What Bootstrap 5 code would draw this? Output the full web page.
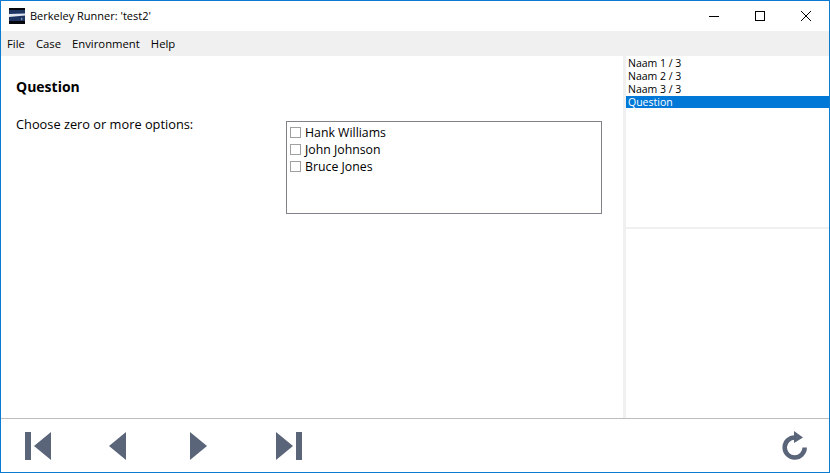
<!DOCTYPE html>
<html lang="en"><head><meta charset="utf-8"><title>Berkeley Runner</title>
<link href="https://cdn.jsdelivr.net/npm/bootstrap@5.3.0/dist/css/bootstrap.min.css" rel="stylesheet">
<style>
html,body{height:100%;margin:0;overflow:hidden}
body{font-family:"Open Sans","Noto Sans",sans-serif;font-size:12px;color:#000;background:#fff}
.win{height:473px;width:830px;border:1px solid #0b7ad1}
.tbar{height:30px;padding-left:8px}
.tlogo{width:16px;height:16px;margin-right:5px}
.ttl{font-size:11px;line-height:16px}
.wbtns{width:138px}
.wbtn{width:46px;height:30px}
.mbar{height:25px;background:#f0f0f0;padding-left:6px;gap:11px;line-height:25px;font-size:11.3px}
.midarea{height:362px}
.leftp{width:622px;flex:none;padding:21px 15px 0}
.qhead{font-size:14px;font-weight:700;line-height:20px;margin-bottom:18px}
.qlabel{width:270px;font-size:12.8px;line-height:17px;padding-top:1px}
.optbox{width:316px;height:93px;border:1px solid #82828c;padding:2px;font-size:12.3px;margin-top:6px}
.opt{height:17px;line-height:17px;gap:4px;padding-left:1px}
.cbox{width:11px;height:11px;border:1px solid #a0a0a0;background:#fff;flex:none;margin-top:-1px}
.vsplit{width:3px;flex:none;background:#f0f0f0}
.rightp{flex:1 1 0;min-width:0}
.treep{height:171px;padding-top:1px}
.hsplit{height:2px;background:#f0f0f0}
.ti{height:13px;line-height:13px;padding-left:2px;font-size:10.5px;white-space:nowrap}
.ti-sel{background:#0078d7;color:#fff;height:12px}
.bbar{height:54px;border-top:1px solid #bcbcbc;padding:0 22px 0 24px}
.nicon{display:block;fill:#5a6579}
.navb1{margin-right:58px}.navb2{margin-right:64px}.navb3{margin-right:69px}
</style></head><body>
<div class="win d-flex flex-column">
 <div class="tbar d-flex align-items-center">
  <svg class="tlogo" viewBox="0 0 16 16"><rect width="16" height="16" fill="#05070d"/><rect y="2" width="16" height="11" fill="#1d3560"/><path d="M0 6 16 5.500V7.500L0 9z" fill="#dfe6f2"/><path d="M12 9.500 14 11 12 12.500z" fill="#7f93b8"/></svg>
  <span class="ttl">Berkeley Runner: 'test2'</span>
  <div class="wbtns d-flex ms-auto">
   <div class="wbtn d-flex align-items-center justify-content-center"><svg width="10" height="10"><path d="M0 5.500h10" stroke="#000" fill="none"/></svg></div>
   <div class="wbtn d-flex align-items-center justify-content-center"><svg width="10" height="10"><rect x=".5" y=".5" width="9" height="9" stroke="#000" fill="none"/></svg></div>
   <div class="wbtn d-flex align-items-center justify-content-center"><svg width="10" height="10"><path d="M0 0 10 10M10 0 0 10" stroke="#000" fill="none"/></svg></div>
  </div>
 </div>
 <div class="mbar d-flex"><span>File</span><span>Case</span><span>Environment</span><span>Help</span></div>
 <div class="midarea d-flex">
  <div class="leftp">
   <div class="qhead">Question</div>
   <div class="d-flex">
    <div class="qlabel">Choose zero or more options:</div>
    <div class="optbox">
     <div class="opt d-flex align-items-center"><span class="cbox"></span><span>Hank Williams</span></div>
     <div class="opt d-flex align-items-center"><span class="cbox"></span><span>John Johnson</span></div>
     <div class="opt d-flex align-items-center"><span class="cbox"></span><span>Bruce Jones</span></div>
    </div>
   </div>
  </div>
  <div class="vsplit"></div>
  <div class="rightp d-flex flex-column">
   <div class="treep">
    <div class="ti">Naam 1 / 3</div><div class="ti">Naam 2 / 3</div><div class="ti">Naam 3 / 3</div><div class="ti ti-sel">Question</div>
   </div>
   <div class="hsplit"></div>
  </div>
 </div>
 <div class="bbar d-flex align-items-center">
  <svg class="nicon navb1" width="26" height="28" viewBox="0 0 26 28"><path d="M0 0h6v28H0zM9 14 26 0v28z"/></svg>
  <svg class="nicon navb2" width="17" height="28" viewBox="0 0 17 28"><path d="M0 14 17 0v28z"/></svg>
  <svg class="nicon navb3" width="17" height="28" viewBox="0 0 17 28"><path d="M17 14 0 0v28z"/></svg>
  <svg class="nicon" width="26" height="28" viewBox="0 0 26 28"><path d="M26 0h-6v28h6zM17 14 0 0v28z"/></svg>
  <svg class="nicon ms-auto" width="25" height="30" viewBox="0 0 25 30"><path d="M13 6.500A10 10 0 1 0 22.700 16.500" fill="none" stroke="#5a6579" stroke-width="4.500"/><path d="M12 0 21 6.500 12 12z"/></svg>
 </div>
</div>
</body></html>
